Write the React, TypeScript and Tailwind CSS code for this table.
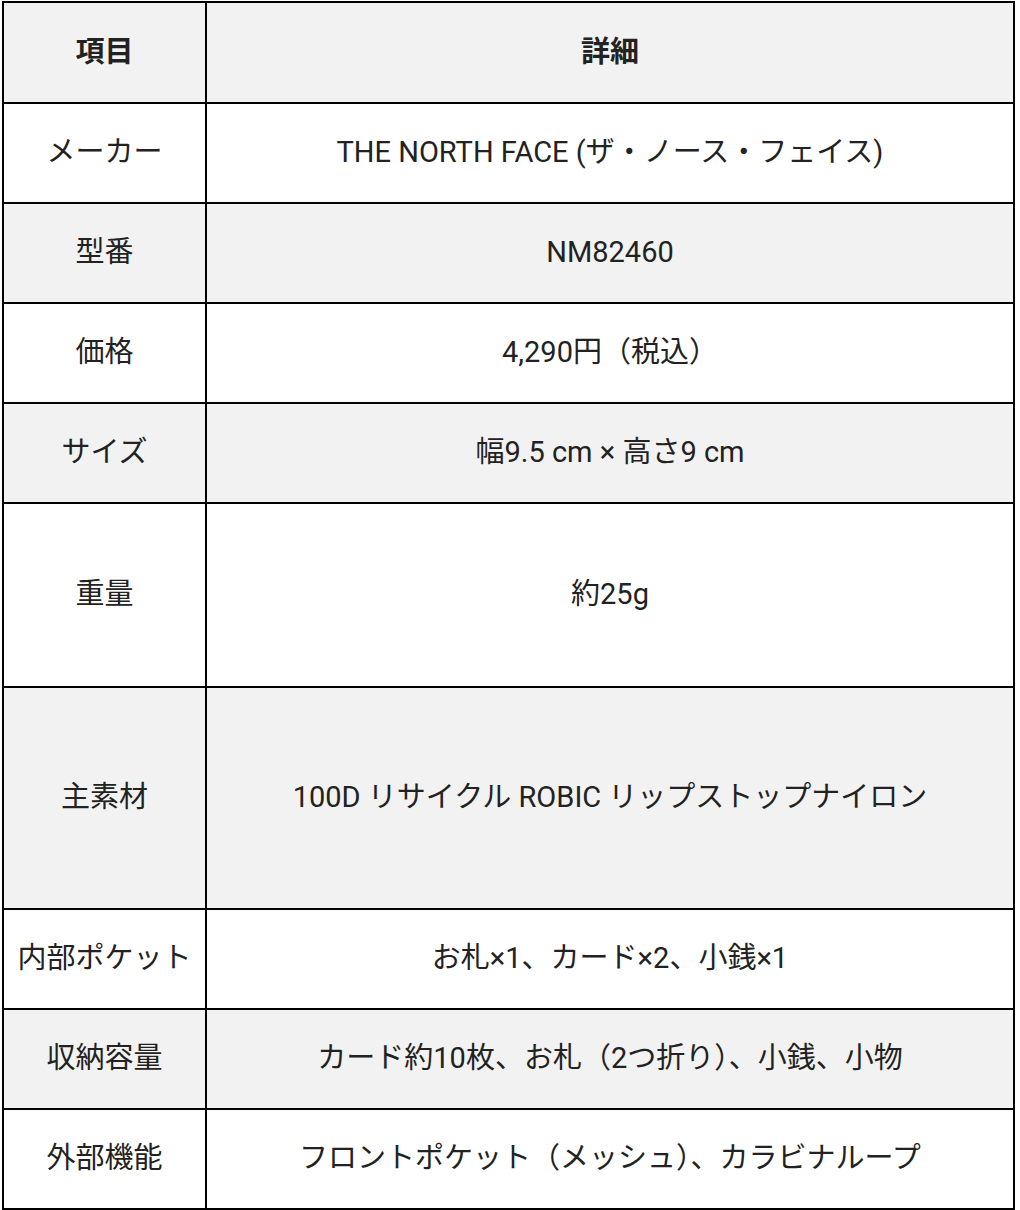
import React from 'react';

const rows: { label: string; value: string; h: string }[] = [
  { label: 'メーカー', value: 'THE NORTH FACE (ザ・ノース・フェイス)', h: 'h-[100px]' },
  { label: '型番', value: 'NM82460', h: 'h-[100px]' },
  { label: '価格', value: '4,290円（税込）', h: 'h-[100px]' },
  { label: 'サイズ', value: '幅9.5 cm × 高さ9 cm', h: 'h-[100px]' },
  { label: '重量', value: '約25g', h: 'h-[184px]' },
  { label: '主素材', value: '100D リサイクル ROBIC リップストップナイロン', h: 'h-[222px]' },
  { label: '内部ポケット', value: 'お札×1、カード×2、小銭×1', h: 'h-[100px]' },
  { label: '収納容量', value: 'カード約10枚、お札（2つ折り）、小銭、小物', h: 'h-[100px]' },
  { label: '外部機能', value: 'フロントポケット（メッシュ）、カラビナループ', h: 'h-[100px]' },
];

export default function App() {
  return (
    <div className="bg-white min-h-[1210px] pl-[2px] pt-[1px] font-['Roboto','Noto_Sans_CJK_JP',sans-serif] text-[29px] text-[#222]">
      <table className="w-[1013px] border-collapse border-2 border-black text-center">
        <thead>
          <tr className="h-[101px] bg-[#f2f2f2]">
            <th className="w-[203px] border-2 border-black font-bold">項目</th>
            <th className="border-2 border-black font-bold">詳細</th>
          </tr>
        </thead>
        <tbody>
          {rows.map((r, i) => (
            <tr key={r.label} className={`${r.h} ${i % 2 === 1 ? 'bg-[#f2f2f2]' : 'bg-white'}`}>
              <td className="border-2 border-black px-1">{r.label}</td>
              <td className="border-2 border-black px-2">{r.value}</td>
            </tr>
          ))}
        </tbody>
      </table>
    </div>
  );
}
